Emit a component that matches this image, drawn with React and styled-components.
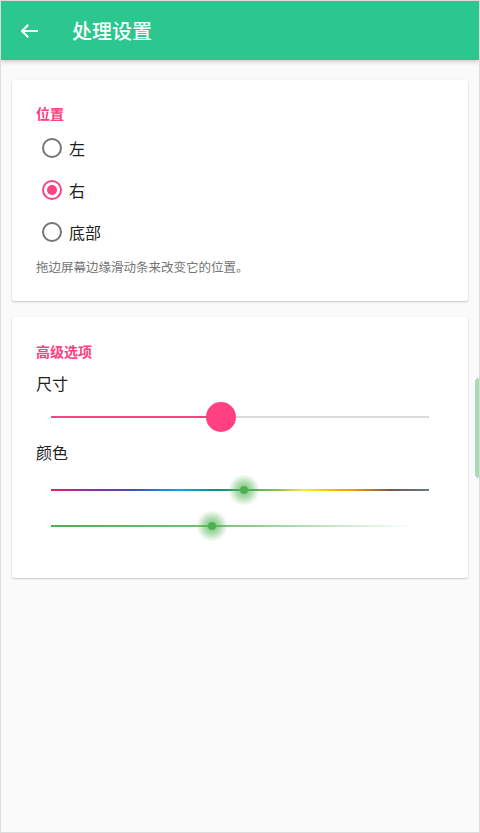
import React, { useState } from "react";
import styled, { createGlobalStyle } from "styled-components";

const GlobalStyle = createGlobalStyle`
    html, body {
        margin: 0;
        padding: 0;
        background: #fafafa;
    }
    * {
        box-sizing: border-box;
    }
`;

const Frame = styled.div`
    width: 480px;
    height: 833px;
    border: 1px solid #dcdcdc;
    background-color: #fafafa;
    font-family: "Noto Sans CJK SC", "Noto Sans", Roboto, sans-serif;
    position: relative;
    overflow: hidden;
`;

const AppBar = styled.header`
    height: 59px;
    background-color: #2cc68f;
    display: flex;
    align-items: center;
    padding-left: 19px;
    box-shadow: 0 2px 4px rgba(0, 0, 0, 0.18);
    position: relative;
    z-index: 2;
`;

const BackButton = styled.button`
    border: none;
    background: none;
    padding: 0;
    width: 18px;
    height: 16px;
    display: flex;
    align-items: center;
    justify-content: center;
    cursor: pointer;
    margin-right: 34px;
`;

const Title = styled.h1`
    margin: 0;
    color: #ffffff;
    font-size: 20px;
    font-weight: 500;
    line-height: 1;
    margin-top: 1px;
`;

const Content = styled.main`
    padding: 20px 11px 0 11px;
    display: flex;
    flex-direction: column;
    gap: 16px;
`;

const Card = styled.section`
    background: #ffffff;
    border-radius: 2px;
    box-shadow: 0 1px 2px rgba(0, 0, 0, 0.2), 0 0 1px rgba(0, 0, 0, 0.08);
    padding: ${(props) => props.$padding};
`;

const Heading = styled.h2`
    margin: 0;
    height: 20px;
    line-height: 20px;
    font-size: 14px;
    font-weight: 700;
    color: #ff4081;
`;

const RadioList = styled.div`
    margin-top: 4px;
    display: flex;
    flex-direction: column;
`;

const RadioRow = styled.label`
    height: 42px;
    display: flex;
    align-items: center;
    padding-left: 6px;
    cursor: pointer;
    font-size: 16px;
    color: #212121;
`;

const RadioCircle = styled.span`
    width: 20px;
    height: 20px;
    border-radius: 50%;
    border: 2px solid ${(props) => (props.$checked ? "#ff4081" : "#757575")};
    display: flex;
    align-items: center;
    justify-content: center;
    margin-right: 7px;

    &::after {
        content: "";
        width: 10px;
        height: 10px;
        border-radius: 50%;
        background: #ff4081;
        display: ${(props) => (props.$checked ? "block" : "none")};
    }
`;

const Helper = styled.p`
    margin: 5px 0 0 0;
    font-size: 12.5px;
    line-height: 18px;
    color: #757575;
`;

const Label = styled.div`
    font-size: 16px;
    line-height: 24px;
    color: #212121;
    margin-top: ${(props) => props.$top || "0"};
`;

const SliderRow = styled.div`
    height: ${(props) => props.$height || "32px"};
    padding: 0 ${(props) => props.$right || "15px"} 0 15px;
    display: flex;
    align-items: center;
`;

const Track = styled.div`
    position: relative;
    flex: 1;
    height: ${(props) => props.$thick || "2px"};
    background: ${(props) => props.$bg};
`;

const Fill = styled.div`
    position: absolute;
    left: 0;
    top: 0;
    bottom: 0;
    background: #ff4081;
`;

const BigThumb = styled.div`
    position: absolute;
    top: 50%;
    width: 30px;
    height: 30px;
    margin: -15px 0 0 -15px;
    border-radius: 50%;
    background: #ff4081;
`;

const GlowThumb = styled.div`
    position: absolute;
    top: 50%;
    width: 32px;
    height: 32px;
    margin: -16px 0 0 -16px;
    border-radius: 50%;
    background: radial-gradient(
        circle,
        rgba(76, 175, 80, 0.7) 0%,
        rgba(76, 175, 80, 0.5) 30%,
        rgba(76, 175, 80, 0.22) 52%,
        rgba(76, 175, 80, 0) 70%
    );
    display: flex;
    align-items: center;
    justify-content: center;

    &::after {
        content: "";
        width: 8px;
        height: 8px;
        border-radius: 50%;
        background: #4caf50;
    }
`;

const ScrollHint = styled.div`
    position: absolute;
    right: 0;
    top: 377px;
    width: 4px;
    height: 100px;
    border-radius: 4px 0 0 4px;
    background: #a8dbb0;
`;

const rainbow =
    "linear-gradient(to right, #e91e63 0%, #9c27b0 10%, #3f51b5 22%, #03a9f4 34%, #009688 44%, #4caf50 52%, #8bc34a 60%, #ffeb3b 67%, #ffc107 73%, #ff9800 80%, #795548 90%, #607d8b 100%)";

const greenFade =
    "linear-gradient(to right, #4caf50 0%, rgba(76,175,80,0.75) 45%, rgba(76,175,80,0) 96%)";

const ArrowBack = () => (
    <svg width="18" height="14" viewBox="0 0 18 14" fill="none">
        <path
            d="M17 7H2M7.5 1.5L2 7l5.5 5.5"
            stroke="#fff"
            strokeWidth="2"
            strokeLinecap="square"
        />
    </svg>
);

const positions = ["左", "右", "底部"];

const App = () => {
    const [pos, setPos] = useState("右");
    const size = 45;

    return (
        <Frame>
            <GlobalStyle />
            <AppBar>
                <BackButton aria-label="back">
                    <ArrowBack />
                </BackButton>
                <Title>处理设置</Title>
            </AppBar>
            <Content>
                <Card $padding="23px 24px 25px 24px">
                    <Heading>位置</Heading>
                    <RadioList>
                        {positions.map((p) => (
                            <RadioRow key={p} onClick={() => setPos(p)}>
                                <RadioCircle $checked={pos === p} />
                                {p}
                            </RadioRow>
                        ))}
                    </RadioList>
                    <Helper>拖边屏幕边缘滑动条来改变它的位置。</Helper>
                </Card>
                <Card $padding="24px 24px 42px 24px">
                    <Heading>高级选项</Heading>
                    <Label $top="10px">尺寸</Label>
                    <SliderRow $height="44px">
                        <Track $bg="#dadada">
                            <Fill style={{ width: `${size}%` }} />
                            <BigThumb style={{ left: `${size}%` }} />
                        </Track>
                    </SliderRow>
                    <Label $top="1px">颜色</Label>
                    <SliderRow $height="52px">
                        <Track $bg={rainbow} $thick="2.5px">
                            <GlowThumb style={{ left: "51%" }} />
                        </Track>
                    </SliderRow>
                    <SliderRow $height="20px">
                        <Track $bg={greenFade} $thick="2.5px">
                            <GlowThumb style={{ left: "42.5%" }} />
                        </Track>
                    </SliderRow>
                </Card>
            </Content>
            <ScrollHint />
        </Frame>
    );
};

export default App;
